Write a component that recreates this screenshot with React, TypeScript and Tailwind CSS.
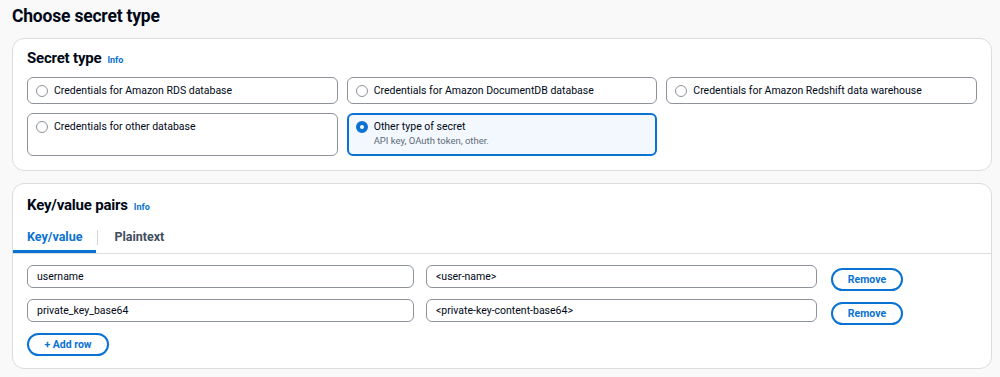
const tiles = [
  { label: 'Credentials for Amazon RDS database' },
  { label: 'Credentials for Amazon DocumentDB database' },
  { label: 'Credentials for Amazon Redshift data warehouse' },
  { label: 'Credentials for other database' },
  { label: 'Other type of secret', hint: 'API key, OAuth token, other.', selected: true },
];

const pairs = [
  { key: 'username', value: '<user-name>' },
  { key: 'private_key_base64', value: '<private-key-content-base64>' },
];

function Radio({ checked }: { checked?: boolean }) {
  return checked ? (
    <span className="mt-[1px] h-[12px] w-[12px] shrink-0 rounded-full border-[4px] border-[#0972d3] bg-white" />
  ) : (
    <span className="mt-[1px] h-[12px] w-[12px] shrink-0 rounded-full border border-[#8d9399] bg-white" />
  );
}

function Heading({ title }: { title: string }) {
  return (
    <div className="flex items-baseline gap-[6px] leading-[20px]">
      <h2 className="text-[15px] font-bold tracking-[-0.2px]">{title}</h2>
      <a className="text-[9px] font-bold text-[#0972d3]">Info</a>
    </div>
  );
}

export default function App() {
  return (
    <div className="min-h-screen bg-[#f9f9fa] pl-[12px] pr-[8px] pt-[4px] text-[#000716] font-['Roboto',sans-serif]">
      <h1 className="text-[17.5px] font-bold leading-[24px] tracking-[-0.2px]">Choose secret type</h1>

      {/* Secret type */}
      <section className="mt-[10px] rounded-[12px] border border-[#dcdcdf] bg-white px-[14px] pb-[14px] pt-[9px]">
        <Heading title="Secret type" />
        <div className="mt-[7px] grid grid-cols-3 gap-[9px]">
          {tiles.map((t) => (
            <div
              key={t.label}
              className={
                t.selected
                  ? 'flex gap-[6px] rounded-[6px] border-2 border-[#0972d3] bg-[#f2f8fd] px-[7px] pb-[7px] pt-[5px]'
                  : 'flex gap-[6px] rounded-[6px] border border-[#8d9399] bg-white px-[8px] py-[6px]'
              }
            >
              <Radio checked={t.selected} />
              <div>
                <div className="text-[10.5px] leading-[13px]">{t.label}</div>
                {t.hint && <div className="mt-[1px] text-[9.5px] leading-[13px] text-[#5f6b7a]">{t.hint}</div>}
              </div>
            </div>
          ))}
        </div>
      </section>

      {/* Key/value pairs */}
      <section className="mt-[12px] rounded-[12px] border border-[#dcdcdf] bg-white pb-[12px] pt-[11px]">
        <div className="px-[14px]">
          <Heading title="Key/value pairs" />
        </div>
        <div className="mt-[8px] flex items-center border-b border-[#dcdcdf]">
          <button className="flex h-[28px] items-center border-b-[3px] border-[#0972d3] px-[14px] text-[12.5px] font-bold text-[#0972d3]">
            Key/value
          </button>
          <span className="mb-[3px] ml-[1px] h-[15px] w-px bg-[#d5d5d9]" />
          <button className="flex h-[28px] items-center border-b-[3px] border-transparent px-[16px] text-[12.5px] font-bold text-[#414d5c]">
            Plaintext
          </button>
        </div>

        <div className="mt-[11px] flex flex-col gap-[11px] px-[14px]">
          {pairs.map((p) => (
            <div key={p.key} className="flex h-[23px] items-start">
              <div className="flex h-[23px] w-[387px] items-center rounded-[6px] border border-[#8d9399] px-[9px] text-[10.5px]">
                {p.key}
              </div>
              <div className="ml-[12px] flex h-[23px] w-[391px] items-center rounded-[6px] border border-[#8d9399] px-[9px] text-[10.5px]">
                {p.value}
              </div>
              <button className="ml-[14px] mt-[3px] flex h-[23px] w-[72px] items-center justify-center rounded-full border-2 border-[#0972d3] text-[10.5px] font-bold text-[#0972d3]">
                Remove
              </button>
            </div>
          ))}
          <button className="flex h-[23px] w-[82px] items-center justify-center rounded-full border-2 border-[#0972d3] text-[10.5px] font-bold text-[#0972d3]">
            + Add row
          </button>
        </div>
      </section>
    </div>
  );
}
